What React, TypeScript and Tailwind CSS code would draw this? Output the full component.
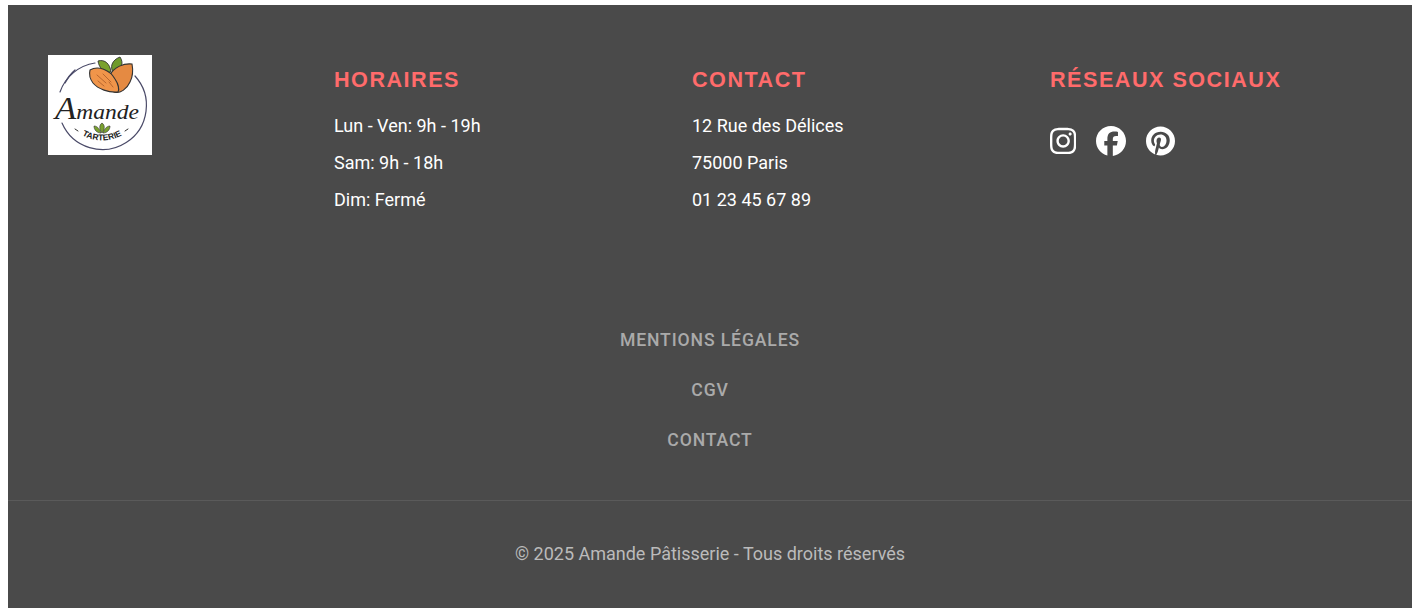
import { FaFacebook, FaInstagram, FaPinterest } from "react-icons/fa6";

const hours = ["Lun - Ven: 9h - 19h", "Sam: 9h - 18h", "Dim: Fermé"];
const contact = ["12 Rue des Délices", "75000 Paris", "01 23 45 67 89"];
const links = ["Mentions légales", "CGV", "Contact"];

function Logo() {
  return (
    <svg viewBox="0 0 104 100" className="h-[100px] w-[104px] bg-white">
      {/* ring */}
      <path d="M12 37 A44 44 0 0 1 47 8" fill="none" stroke="#4a4a68" strokeWidth="1.2" strokeLinecap="round" />
      <path d="M17 28 A40 40 0 0 1 27 15" fill="none" stroke="#4a4a68" strokeWidth="1.2" strokeLinecap="round" />
      <path d="M87 21 A44 44 0 1 1 14 68" fill="none" stroke="#4a4a68" strokeWidth="1.2" strokeLinecap="round" />
      {/* leaves */}
      <path d="M50 6 C57 4 62 9 63 17 C56 18 51 13 50 6Z" fill="#7aa12f" stroke="#333" strokeWidth="0.9" />
      <path d="M72 2 C76 8 74 14 66 19 C61 12 64 5 72 2Z" fill="#6f9a2b" stroke="#333" strokeWidth="0.9" />
      {/* almonds */}
      <path d="M84 9 C76 8 66 12 62 20 L66 37 C72 39 79 34 82 27 C85 21 85 14 84 9Z" fill="#e58a42" stroke="#333" strokeWidth="1.1" />
      <path d="M42 15 C50 10 62 15 67 24 C71 30 71 35 70 37 C61 38 50 34 45 28 C42 24 41 19 42 15Z" fill="#f0954a" stroke="#333" strokeWidth="1.1" />
      <path d="M49 20 L58 28 M55 19 L63 27 M50 26 L56 31 M61 27 L65 32" stroke="#a85a28" strokeWidth="0.8" strokeLinecap="round" />
      {/* wordmark */}
      <text x="49" y="64" textAnchor="middle" fontFamily="'Liberation Serif', serif" fontStyle="italic" fill="#222" fontSize="21" textLength="84" lengthAdjust="spacingAndGlyphs">
        <tspan fontSize="31">A</tspan>mande
      </text>
      {/* small leaves */}
      <path d="M54 68 C57 70 57 74 54 78 C51 74 51 70 54 68Z" fill="#7aa12f" stroke="#333" strokeWidth="0.6" />
      <path d="M46 71 C50 71 52 75 53 78 C49 78 46 75 46 71Z M62 71 C58 71 56 75 55 78 C59 78 62 75 62 71Z" fill="#7aa12f" stroke="#333" strokeWidth="0.6" />
      <path d="M27 74 L30 76 M77 76 L80 74" stroke="#333" strokeWidth="1" strokeLinecap="round" />
      <path id="logo-curve" d="M30 78 Q54 93 78 78" fill="none" />
      <text fontFamily="'Liberation Sans', sans-serif" fontWeight="700" fontSize="8.5" fill="#222" textAnchor="middle">
        <textPath href="#logo-curve" startOffset="50%">TARTERIE</textPath>
      </text>
    </svg>
  );
}

function Heading({ children }: { children: string }) {
  return (
    <h3 className="mb-[20px] font-['Liberation_Sans',sans-serif] text-[21.6px] leading-[25px] font-bold tracking-[1.5px] text-[#ff6b6b] uppercase">
      {children}
    </h3>
  );
}

function Column({ title, rows }: { title: string; rows: string[] }) {
  return (
    <div className="pt-3">
      <Heading>{title}</Heading>
      <ul className="flex flex-col">
        {rows.map((row) => (
          <li key={row} className="h-[37px] text-[18px] leading-[28px] text-white">
            {row}
          </li>
        ))}
      </ul>
    </div>
  );
}

export default function App() {
  return (
    <div className="h-[611px] overflow-hidden bg-white pt-[5px] pl-2 font-['Roboto',sans-serif]">
      <footer className="flex h-[603px] w-[1404px] flex-col bg-[#4a4a4a]">
        <div className="grid grid-cols-[250px_322px_322px_322px] gap-x-9 px-10 pt-[50px]">
          <Logo />
          <Column title="Horaires" rows={hours} />
          <Column title="Contact" rows={contact} />
          <div className="pt-3">
            <Heading>Réseaux sociaux</Heading>
            <div className="mt-[34px] flex items-center gap-5 text-white">
              <FaInstagram className="h-[30px] w-[26.25px]" />
              <FaFacebook className="h-[30px] w-[30px]" />
              <FaPinterest className="h-[30px] w-[29px]" />
            </div>
          </div>
        </div>

        <nav className="mt-[105px] flex flex-col items-center gap-[26px]">
          {links.map((link) => (
            <a key={link} className="text-[17.6px] leading-[24px] font-medium tracking-[0.88px] text-[#aaaaaa] uppercase">
              {link}
            </a>
          ))}
        </nav>

        <div className="mt-[48px] border-t border-[#5a5a5a] pt-[39px] text-center text-[18px] leading-[28px] text-[#bbbbbb]">
          © 2025 Amande Pâtisserie - Tous droits réservés
        </div>
      </footer>
    </div>
  );
}
